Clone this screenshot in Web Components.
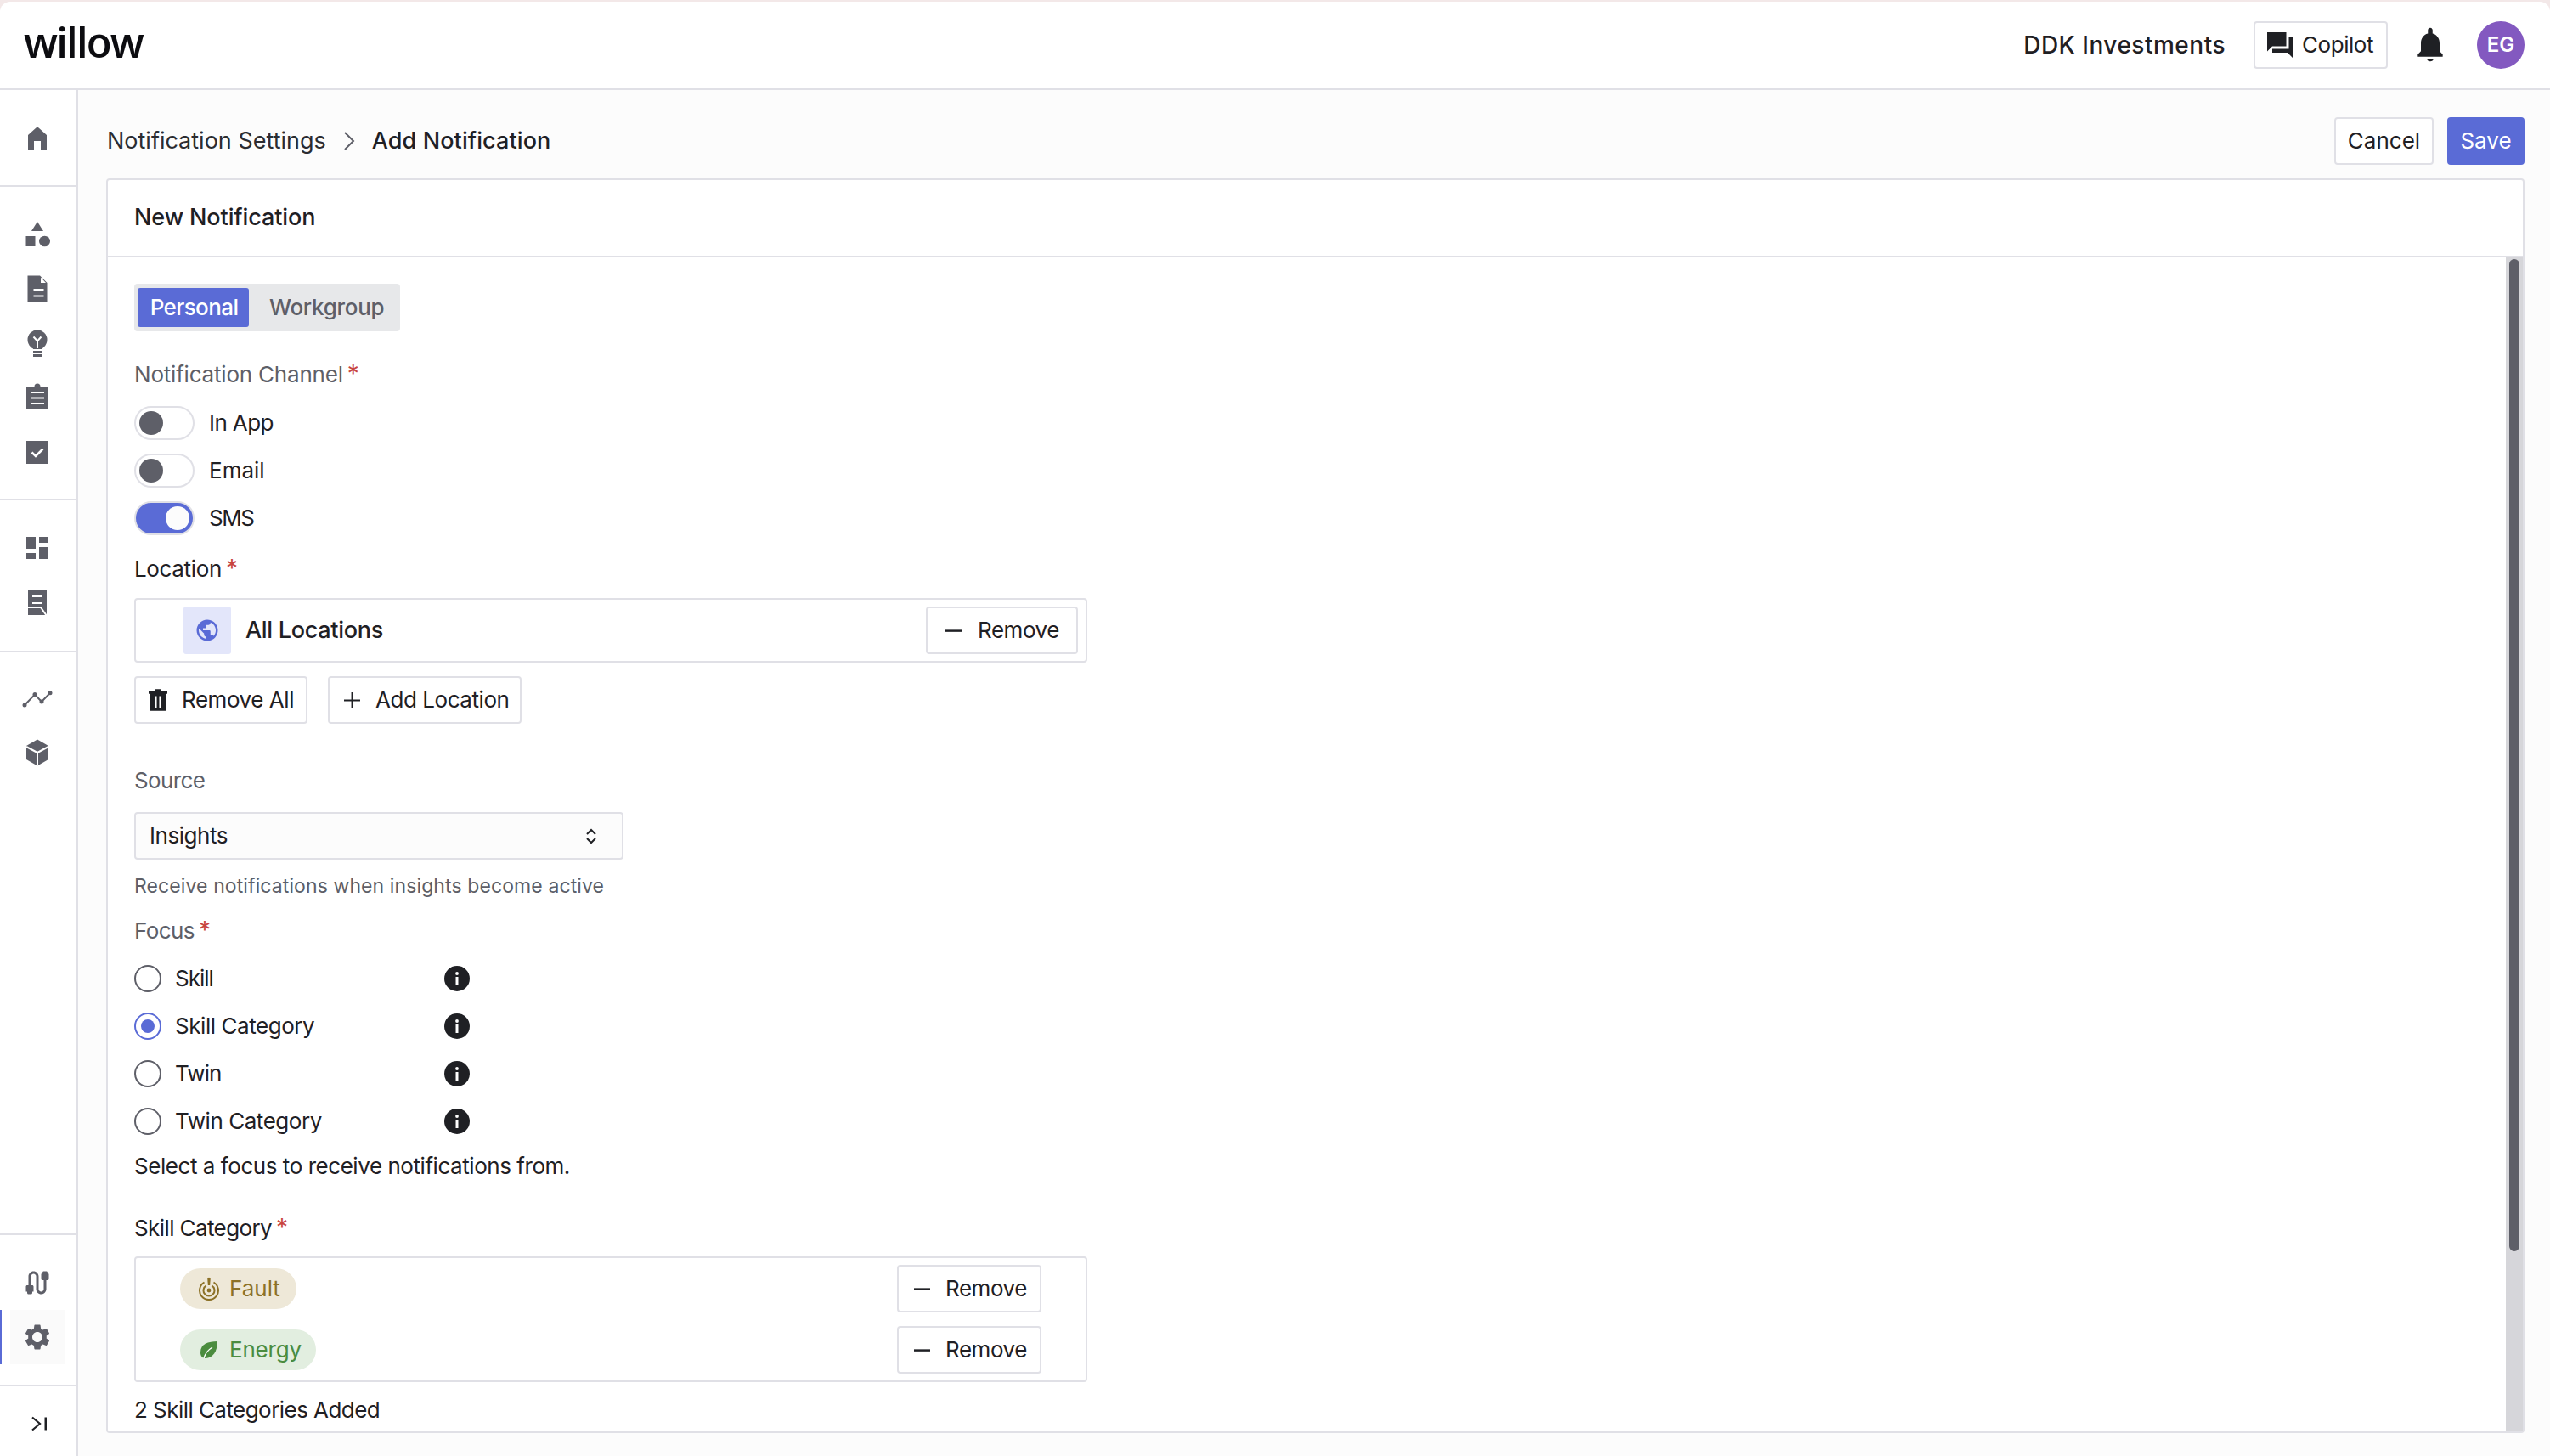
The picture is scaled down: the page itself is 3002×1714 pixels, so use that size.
<!DOCTYPE html>
<html>
<head>
<meta charset="utf-8">
<title>Add Notification</title>
<style>
  html, body { margin: 0; height: 100%; }
  body {
    width: 3002px; height: 1714px; overflow: hidden;
    background: #f3e8e8; padding-top: 2px; box-sizing: border-box;
    font: 400 26px/40px Inter, "Liberation Sans", sans-serif; color: #1f2024;
  }
</style>
</head>
<body>
<wl-app></wl-app>
<script>
  const ICONS = {
    /* nav icons drawn in a 40 box */
    home: [40, '<path d="M20 7c1 0 1.6.5 2.4 1.2L31 16v17h-7V23h-8v10H9V16l8.600-7.800C18.400 7.500 19 7 20 7z"/>'],
    shapes: [40, '<path d="M20 5l7 11H13z"/><rect x="6.500" y="22" width="11" height="12"/><ellipse cx="28.500" cy="28" rx="6.500" ry="6.300"/>'],
    doc: [40, '<path d="M8.500 4.500H23l8.500 8.500v22.500h-23z"/><path fill="#fff" d="M24 6.500l6 6.500h-6zM15.500 20h12v2h-12zM15.500 27.500h12v2h-12z"/>'],
    bulb: [40, '<circle cx="20" cy="16" r="11.500"/><rect x="15" y="24" width="10" height="12"/><path fill="none" stroke="#fff" stroke-width="2" d="M15.500 12.500l4.500 5 4.500-5M20 17.500V26M15 28h10M15 32h10"/>'],
    clipboard: [40, '<path d="M7 7h9.500a3.500 3.500 0 0 1 7 0H33v27H7z"/><path fill="#fff" d="M12 13h16v2H12zM12 19.500h16v2H12zM12 26h16v2H12z"/>'],
    check: [40, '<rect x="7" y="7" width="26" height="27"/><path fill="none" stroke="#fff" stroke-width="2.500" d="M13.500 20.500l4.500 4.500 8.500-8.500"/>'],
    dashboard: [40, '<path d="M7 7h11v14H7zM7 26h11v7H7zM22 7h11v7H22zM22 19h11v14H22z"/>'],
    report: [40, '<rect x="9" y="5" width="22" height="30"/><path fill="none" stroke="#fff" stroke-width="2" d="M14 13h12M14 21h12M8 26h16l7 10"/>'],
    trend: [40, '<path fill="none" stroke="currentColor" stroke-width="2" d="M5 28l12-12.400L25 24 35 13.800"/><circle cx="5" cy="28" r="2.500"/><circle cx="17" cy="15.600" r="2.500"/><circle cx="25" cy="24" r="2.500"/><circle cx="35" cy="13.800" r="2.500"/>'],
    cube: [40, '<path d="M20 4.500L33 12v16l-13 7.500L7 28V12z"/><path fill="none" stroke="#fff" stroke-width="2" d="M20 20L7 13M20 20l13-7M20 20v15.500"/>'],
    cable: [24, '<path d="M20 5V4c0-.55-.45-1-1-1h-2c-.55 0-1 .45-1 1v1h-1v4c0 .55.45 1 1 1h1v7c0 1.100-.9 2-2 2s-2-.9-2-2V7c0-2.210-1.790-4-4-4S5 4.790 5 7v7H4c-.55 0-1 .45-1 1v4h1v1c0 .55.45 1 1 1h2c.55 0 1-.45 1-1v-1h1v-4c0-.55-.45-1-1-1H7V7c0-1.100.9-2 2-2s2 .9 2 2v10c0 2.210 1.790 4 4 4s4-1.790 4-4v-7h1c.55 0 1-.45 1-1V5h-1z"/>'],
    settings: [24, '<path d="M19.140 12.940c.04-.3.06-.61.06-.94 0-.32-.02-.64-.07-.94l2.030-1.580c.18-.14.23-.41.12-.61l-1.920-3.320c-.12-.22-.37-.29-.59-.22l-2.390.96c-.5-.38-1.030-.7-1.620-.94l-.36-2.540c-.04-.24-.24-.41-.48-.41h-3.840c-.24 0-.43.17-.47.41l-.36 2.540c-.59.24-1.130.57-1.620.94l-2.390-.96c-.22-.08-.47 0-.59.22L2.740 8.870c-.12.21-.08.47.12.61l2.030 1.580c-.05.3-.09.63-.09.94s.02.64.07.94l-2.030 1.580c-.18.14-.23.41-.12.61l1.920 3.320c.12.22.37.29.59.22l2.390-.96c.5.38 1.030.7 1.620.94l.36 2.540c.05.24.24.41.48.41h3.840c.24 0 .44-.17.47-.41l.36-2.540c.59-.24 1.130-.56 1.620-.94l2.390.96c.22.08.47 0 .59-.22l1.920-3.320c.12-.22.07-.47-.12-.61l-2.010-1.580zM12 16c-2.200 0-4-1.800-4-4s1.800-4 4-4 4 1.800 4 4-1.800 4-4 4z"/>'],
    collapse: [24, '<path fill="none" stroke="currentColor" stroke-width="2.200" d="M3 4.500l9 7.500-9 7.500"/><rect x="17.500" y="4.500" width="2.500" height="15"/>'],
    forum: [24, '<path d="M22 6h-3v9H6v3h12l4 4zM17 2H2v15l4-4h11z"/>'],
    bell: [24, '<path d="M12 22.500c1.100 0 2-.6 2-1.500h-4c0 .9.9 1.500 2 1.500zm6-6.500v-5c0-3.070-1.640-5.640-4.500-6.320V2.500c0-.83-.67-1.500-1.500-1.500s-1.500.67-1.500 1.500v2.180C7.630 5.360 6 7.920 6 11v5l-2 2v1.500h16V18l-2-2z"/>'],
    trash: [24, '<path d="M8 0h8v3h8v3h-2v22H2V6H0V3h8z"/><path fill="#fff" d="M8 9h2.400v15H8zM13.600 9H16v15h-2.400z"/>'],
    minus: [20, '<rect x="0" y="8.800" width="20" height="2.600"/>'],
    plus: [20, '<path d="M9 0h2v9h9v2h-9v9H9v-9H0V9h9z"/>'],
    globe: [24, '<path d="M12 2C6.480 2 2 6.480 2 12s4.480 10 10 10 10-4.480 10-10S17.520 2 12 2zm-1 17.930c-3.950-.49-7-3.850-7-7.930 0-.62.08-1.210.21-1.790L9 15v1c0 1.100.9 2 2 2v1.930zm6.900-2.540c-.26-.81-1-1.390-1.900-1.390h-1v-3c0-.55-.45-1-1-1H8v-2h2c.55 0 1-.45 1-1V7h2c1.100 0 2-.9 2-2v-.41c2.930 1.190 5 4.060 5 7.410 0 2.080-.8 3.970-2.100 5.390z"/>'],
    updown: [12, '<path fill="none" stroke="currentColor" stroke-width="2" d="M1 7l5-5 5 5M1 12l5 5 5-5"/>'],
    chevron: [14, '<path fill="none" stroke="currentColor" stroke-width="2" d="M2 1l10 10L2 21"/>'],
    info: [30, '<circle cx="15" cy="15" r="15"/><path fill="#fff" d="M13.500 13h3v10h-3z"/><circle cx="15" cy="9" r="1.900" fill="#fff"/>'],
    fault: [26, '<path fill="none" stroke="currentColor" stroke-width="2" d="M7.500 6.500A11 11 0 1 0 18.500 6.500"/><path fill="none" stroke="currentColor" stroke-width="2" d="M9.800 10.400A6.500 6.500 0 1 0 16.200 10.400"/><circle cx="13" cy="16" r="2.400"/><path d="M11.300 2.500a1.700 1.700 0 0 1 3.400 0L14.200 10h-2.400z"/>'],
    leaf: [22, '<path d="M21 1C10 1 1 4 1 14c0 4 2 7 5.500 7C16 21 21 12 21 1z"/><path fill="none" stroke="#fff" stroke-width="1.400" d="M5 21c1.500-6 5-10 10-13"/>']
  };

  /* small helper, every element is just css + markup in an open shadow root */
  function define(name, css, html) {
    customElements.define(name, class extends HTMLElement {
      constructor() {
        super();
        this.attachShadow({mode: 'open'}).innerHTML = '<style>' + css + '</style>' + html;
      }
    });
  }

  class WlIcon extends HTMLElement {
    connectedCallback() {
      const icon = ICONS[this.getAttribute('name')];
      const w = this.getAttribute('w') || icon[0];
      const h = this.getAttribute('h') || w;
      const vb = this.getAttribute('vb') || ('0 0 ' + icon[0] + ' ' + icon[0]);
      this.attachShadow({mode: 'open'}).innerHTML =
        '<style>:host{display:inline-flex;flex:none}svg{display:block;fill:currentColor}</style>' +
        '<svg width="' + w + '" height="' + h + '" viewBox="' + vb + '">' + icon[1] + '</svg>';
    }
  }
  customElements.define('wl-icon', WlIcon);

  define('wl-btn', `
    :host {
      display: inline-flex; align-items: center; box-sizing: border-box; height: 56px;
      padding: 0 var(--pr, 16px) 0 var(--pl, 16px); gap: var(--gap, 17px);
      background: #fff; border: 2px solid #e0e0e6; border-radius: 4px;
      white-space: nowrap; justify-content: var(--just, flex-start);
    }
    :host([primary]) { background: #5a6bd6; border-color: #5a6bd6; color: #fff; }
    ::slotted([slot=icon]) { display: inline-flex; }
  `, '<slot name="icon"></slot><slot></slot>');

  define('wl-header', `
    :host {
      display: flex; align-items: center; height: 102px; box-sizing: content-box;
      padding: 0 30px 0 28px; background: #fff; border-bottom: 2px solid #e0e0e6;
      border-radius: 12px 12px 0 0;
    }
    .logo { font: 600 49px/60px "Open Sans", sans-serif; letter-spacing: -1.800px; color: #0c0c10; margin-top: -8px; }
    .org { margin-left: auto; font-size: 28px; font-weight: 500; letter-spacing: .5px; }
    wl-btn { margin-left: 33px; --pl: 11px; --pr: 13px; --gap: 8px; width: 158px; letter-spacing: -.45px; }
    wl-icon[name=bell] { margin-left: 28px; }
    .avatar {
      width: 56px; height: 56px; border-radius: 50%; margin-left: 33px; background: #8359c0;
      color: #fff; font-size: 24px; font-weight: 600; display: flex; align-items: center; justify-content: center;
    }
  `, `
    <span class="logo">willow</span>
    <span class="org">DDK Investments</span>
    <wl-btn><wl-icon slot="icon" name="forum" w="36"></wl-icon>Copilot</wl-btn>
    <wl-icon name="bell" w="44"></wl-icon>
    <span class="avatar">EG</span>
  `);

  define('wl-nav-item', `
    :host { display: flex; align-items: center; justify-content: center; width: 64px; height: 64px; margin-left: 12px; color: #5e5f68; }
    :host([active]) { background: #fafafa; }
  `, '<slot></slot>');

  define('wl-sidebar', `
    :host {
      display: flex; flex-direction: column; width: 90px; flex: none; background: #fff;
      border-right: 2px solid #e0e0e6;
    }
    section { border-bottom: 2px solid #e0e0e6; box-sizing: border-box; position: relative; }
    .top { height: 114px; padding-top: 25px; }
    .a { height: 369px; padding-top: 24px; }
    .b { height: 179px; padding-top: 24px; }
    .c { flex: 1; padding-top: 22px; }
    .d { height: 178px; padding-top: 24px; }
    .e { height: 82px; flex: none; border: 0; display: flex; align-items: center; padding-left: 35px; }
    .e wl-icon { margin-top: 5px; color: #1f2024; }
    .mark { position: absolute; left: 0; top: 88px; width: 2px; height: 64px; background: #5a6bd6; }
  `, `
    <section class="top"><wl-nav-item><wl-icon name="home"></wl-icon></wl-nav-item></section>
    <section class="a">
      <wl-nav-item><wl-icon name="shapes"></wl-icon></wl-nav-item>
      <wl-nav-item><wl-icon name="doc"></wl-icon></wl-nav-item>
      <wl-nav-item><wl-icon name="bulb"></wl-icon></wl-nav-item>
      <wl-nav-item><wl-icon name="clipboard"></wl-icon></wl-nav-item>
      <wl-nav-item><wl-icon name="check"></wl-icon></wl-nav-item>
    </section>
    <section class="b">
      <wl-nav-item><wl-icon name="dashboard"></wl-icon></wl-nav-item>
      <wl-nav-item><wl-icon name="report"></wl-icon></wl-nav-item>
    </section>
    <section class="c">
      <wl-nav-item><wl-icon name="trend"></wl-icon></wl-nav-item>
      <wl-nav-item><wl-icon name="cube"></wl-icon></wl-nav-item>
    </section>
    <section class="d">
      <wl-nav-item><wl-icon name="cable" w="36"></wl-icon></wl-nav-item>
      <wl-nav-item active><wl-icon name="settings" w="36"></wl-icon></wl-nav-item>
      <span class="mark"></span>
    </section>
    <section class="e"><wl-icon name="collapse" w="24"></wl-icon></section>
  `);

  define('wl-breadcrumb', `
    :host { display: flex; align-items: center; font-size: 27px; color: #2b2c31; }
    wl-icon { margin: 0 20px 0 20px; color: #5e5f68; }
    b { font-weight: 500; color: #1f2024; letter-spacing: .1px; }
  `, `<span>Notification Settings</span><wl-icon name="chevron" w="14" h="22" vb="0 0 14 22"></wl-icon><b>Add Notification</b>`);

  define('wl-tabs', `
    :host {
      display: inline-flex; align-items: center; height: 56px; padding-left: 4px; box-sizing: border-box;
      background: #e7e8ea; border-radius: 4px; color: #5e5f68; font-weight: 500;
    }
    .on { display: flex; align-items: center; justify-content: center; box-sizing: border-box; padding-left: 2px; width: 131px; height: 46px; background: #5a6bd6; color: #fff; border-radius: 3px; letter-spacing: -.6px; }
    .off { padding-left: 24px; width: 178px; box-sizing: border-box; letter-spacing: -.3px; }
  `, '<span class="on">Personal</span><span class="off">Workgroup</span>');

  define('wl-toggle', `
    :host { display: flex; align-items: center; height: 56px; gap: 17px; }
    .track {
      box-sizing: border-box; width: 71px; height: 40px; border: 2px solid #e0e0e6; border-radius: 20px;
      padding: 4px; display: flex; background: #fff;
    }
    .knob { width: 28px; height: 28px; border-radius: 50%; background: #5e5f68; }
    :host([on]) .track { background: #5a6bd6; justify-content: flex-end; }
    :host([on]) .knob { background: #fcfcfc; }
  `, '<span class="track"><span class="knob"></span></span><slot></slot>');

  define('wl-radio', `
    :host { display: grid; grid-template-columns: 32px 301px 30px; column-gap: 16px; align-items: center; height: 56px; }
    .dot { box-sizing: border-box; width: 32px; height: 32px; border: 2px solid #5e5f68; border-radius: 50%; display: flex; align-items: center; justify-content: center; }
    .dot i { width: 16px; height: 16px; border-radius: 50%; }
    :host([checked]) .dot { border-color: #5a6bd6; }
    :host([checked]) .dot i { background: #5a6bd6; }
    wl-icon { color: #1f2024; }
  `, '<span class="dot"><i></i></span><span><slot></slot></span><wl-icon name="info"></wl-icon>');

  define('wl-label', `
    :host { display: block; line-height: 40px; height: 40px; }
    :host([muted]) { color: #5e5f68; }
    i { font-style: normal; color: #c8453f; font-size: 28px; line-height: 0; margin-left: 5px; letter-spacing: 0; }
  `, '<slot></slot><i>*</i>');

  define('wl-chip', `
    :host {
      display: inline-flex; align-items: center; height: 48px; gap: 11px; padding-left: 21px;
      border-radius: 24px; box-sizing: border-box; letter-spacing: 0;
    }
    :host([tone=fault]) { background: #eee8d8; color: #8c7127; }
    :host([tone=energy]) { background: #e2eee0; color: #4b8c3f; }
  `, '<slot name="icon"></slot><slot></slot>');

  define('wl-row', `
    :host { display: flex; align-items: center; justify-content: space-between; }
  `, '<slot></slot>');

  define('wl-form', `
    :host { display: block; padding: 31px 0 0 31px; width: 1122px; letter-spacing: -.45px; }
    .m12 { margin-top: 12px; } .m9 { margin-top: 9px; } .m47 { margin-top: 47px; }
    .box { box-sizing: border-box; width: 1122px; border: 2px solid #e0e0e6; border-radius: 4px; background: #fff; }
    .loc { height: 76px; margin-top: 14px; display: flex; align-items: center; padding: 0 9px 0 56px; }
    .tile { width: 56px; height: 56px; border-radius: 3px; background: #e3e6fa; color: #5a6bd6; display: flex; align-items: center; justify-content: center; }
    .name { margin-left: 17px; font-size: 27px; font-weight: 500; flex: 1; letter-spacing: -.3px; }
    .loc wl-btn { --pl: 21px; --pr: 21px; --gap: 19px; width: 179px; }
    .actions { display: flex; gap: 24px; margin-top: 16px; }
    .select {
      display: flex; align-items: center; justify-content: space-between; box-sizing: border-box;
      width: 576px; height: 56px; margin-top: 17px; padding: 0 30px 0 16px;
      border: 2px solid #e0e0e6; border-radius: 4px; background: #fcfcfc;
    }
    .help { margin-top: 11px; color: #5e5f68; font-size: 23px; letter-spacing: .1px; }
    .radios { margin-top: 8px; }
    .hint { margin-top: 5px; }
    .skills { margin-top: 13px; padding: 8px 52px; display: flex; flex-direction: column; gap: 16px; }
    .skills wl-btn { --pl: 18px; --pr: 14px; --gap: 18px; width: 170px; }
    .count { margin-top: 13px; letter-spacing: -.55px; }
    wl-label { letter-spacing: -.6px; }
  `, `
    <wl-tabs></wl-tabs>
    <wl-label muted style="margin-top:31px;letter-spacing:-.2px">Notification Channel</wl-label>
    <div class="m9">
      <wl-toggle style="letter-spacing:-.6px">In App</wl-toggle>
      <wl-toggle style="letter-spacing:0">Email</wl-toggle>
      <wl-toggle on style="letter-spacing:-1.500px">SMS</wl-toggle>
    </div>
    <wl-label class="m12" style="letter-spacing:-.35px">Location</wl-label>
    <div class="box loc">
      <span class="tile"><wl-icon name="globe" w="30"></wl-icon></span>
      <span class="name">All Locations</span>
      <wl-btn><wl-icon slot="icon" name="minus" w="19"></wl-icon>Remove</wl-btn>
    </div>
    <div class="actions">
      <wl-btn style="--pl:15px;--gap:17px;width:204px"><wl-icon slot="icon" name="trash" w="22" h="26" vb="0 0 24 28"></wl-icon>Remove All</wl-btn>
      <wl-btn style="--pl:17px;--gap:18px;width:228px"><wl-icon slot="icon" name="plus" w="19"></wl-icon>Add Location</wl-btn>
    </div>
    <div class="m47" style="color:#5e5f68;letter-spacing:-.6px">Source</div>
    <div class="select"><span>Insights</span><wl-icon name="updown" w="12" h="19" vb="0 0 12 19"></wl-icon></div>
    <div class="help">Receive notifications when insights become active</div>
    <wl-label muted style="margin-top:13px">Focus</wl-label>
    <div class="radios">
      <wl-radio style="letter-spacing:-1px">Skill</wl-radio>
      <wl-radio checked>Skill Category</wl-radio>
      <wl-radio style="letter-spacing:-.9px">Twin</wl-radio>
      <wl-radio>Twin Category</wl-radio>
    </div>
    <div class="hint">Select a focus to receive notifications from.</div>
    <wl-label style="margin-top:33px">Skill Category</wl-label>
    <div class="box skills">
      <wl-row>
        <wl-chip tone="fault" style="width:137px"><wl-icon slot="icon" name="fault" w="26" h="28" vb="0 0 26 28"></wl-icon>Fault</wl-chip>
        <wl-btn><wl-icon slot="icon" name="minus" w="19"></wl-icon>Remove</wl-btn>
      </wl-row>
      <wl-row>
        <wl-chip tone="energy" style="width:160px;letter-spacing:-.2px"><wl-icon slot="icon" name="leaf" w="22" style="margin:0 2px"></wl-icon>Energy</wl-chip>
        <wl-btn><wl-icon slot="icon" name="minus" w="19"></wl-icon>Remove</wl-btn>
      </wl-row>
    </div>
    <div class="count">2 Skill Categories Added</div>
  `);

  define('wl-card', `
    :host {
      display: flex; flex-direction: column; flex: 1; min-height: 0; box-sizing: border-box;
      background: #fff; border: 2px solid #e0e0e6; border-radius: 4px;
    }
    .title { display: flex; align-items: center; height: 91px; box-sizing: border-box; padding-bottom: 2px; flex: none; padding-left: 31px; font-size: 27px; font-weight: 500; letter-spacing: -.1px; border-bottom: 2px solid #e0e0e6; }
    .body { display: flex; flex: 1; min-height: 0; }
    .scroll { flex: 1; overflow: hidden; }
    .track { flex: none; width: 20px; background: #d6d6da; padding: 2px 4px 0; box-sizing: border-box; }
    .thumb { height: 1168px; background: #5e5f68; border-radius: 6px; }
  `, `
    <div class="title"><slot name="title"></slot></div>
    <div class="body">
      <div class="scroll"><slot></slot></div>
      <div class="track"><div class="thumb"></div></div>
    </div>
  `);

  define('wl-main', `
    :host { display: flex; flex-direction: column; flex: 1; min-width: 0; padding: 32px 30px 27px 33px; background: #fcfcfc; box-sizing: border-box; }
    .bar { display: flex; align-items: center; justify-content: space-between; height: 56px; margin-bottom: 16px; flex: none; padding-left: 1px; }
    .btns { display: flex; gap: 16px; }
    wl-btn { --just: center; --pl: 0px; --pr: 0px; }
  `, `
    <div class="bar">
      <wl-breadcrumb></wl-breadcrumb>
      <div class="btns">
        <wl-btn style="width:117px">Cancel</wl-btn>
        <wl-btn primary style="width:91px">Save</wl-btn>
      </div>
    </div>
    <wl-card>
      <span slot="title">New Notification</span>
      <wl-form></wl-form>
    </wl-card>
  `);

  define('wl-app', `
    :host { display: flex; flex-direction: column; height: 1712px; }
    .row { display: flex; flex: 1; min-height: 0; }
  `, '<wl-header></wl-header><div class="row"><wl-sidebar></wl-sidebar><wl-main></wl-main></div>');
</script>
</body>
</html>
